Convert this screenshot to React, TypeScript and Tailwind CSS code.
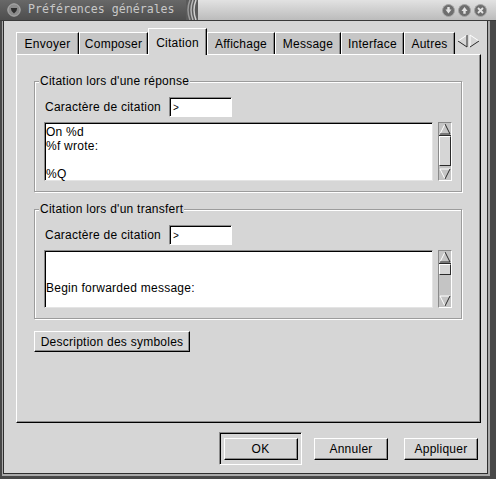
import React from 'react'

const tabs = [
  { name: 'Envoyer', w: 'w-[63px]' },
  { name: 'Composer', w: 'w-[69px]' },
  { name: 'Citation', w: 'w-[59px]', active: true },
  { name: 'Affichage', w: 'w-[68px]' },
  { name: 'Message', w: 'w-[66px]' },
  { name: 'Interface', w: 'w-[63px]' },
  { name: 'Autres', w: 'w-[51px]' },
]

function TitleButton({ kind }: { kind: 'down' | 'up' | 'close' }) {
  return (
    <svg width="13" height="13" viewBox="0 0 13 13">
      <circle cx="6.5" cy="6.5" r="6" fill="#6e6e6e" stroke="#a4a4a4" strokeWidth="1" />
      {kind === 'down' && <path d="M3.5 5.5 L9.5 5.5 L6.5 9.5 Z M5.3 3 L7.7 3 L7.7 5.6 L5.3 5.6 Z" fill="#e4e4e4" />}
      {kind === 'up' && <path d="M3.5 7 L9.5 7 L6.5 3 Z M5.3 6.9 L7.7 6.9 L7.7 9.8 L5.3 9.8 Z" fill="#e4e4e4" />}
      {kind === 'close' && <path d="M4 4 L9 9 M9 4 L4 9" stroke="#e4e4e4" strokeWidth="1.8" />}
    </svg>
  )
}

function TitleBar() {
  return (
    <div className="flex h-[21px] flex-none items-stretch border-b border-[#3a3a3a] bg-[#585858]">
      <div className="flex w-[186px] flex-none items-center bg-gradient-to-b from-[#686868] to-[#4e4e4e] pl-[7px]">
        <svg width="14" height="14" viewBox="0 0 14 14">
          <circle cx="7" cy="7" r="6.2" fill="#8c8c8c" stroke="#b0b0b0" strokeWidth="1" />
          <path d="M3.8 5 L10.2 5 L9.4 8 L7 10.5 L4.6 8 Z" fill="#2e2e2e" />
        </svg>
        <span className="ml-[7px] font-['DejaVu_Sans_Mono',monospace] text-[11.6px] leading-none tracking-normal text-[#c8c8c8]">
          Préférences générales
        </span>
      </div>
      <svg width="12" height="20" viewBox="0 0 12 20" className="flex-none bg-[#5a5a5a]">
        <path d="M4 0 Q0 10 4 20" stroke="#9a9a9a" strokeWidth="1.5" fill="none" />
        <path d="M7 0 Q3 10 7 20" stroke="#b8b8b8" strokeWidth="1.5" fill="none" />
        <path d="M10 0 Q6 10 10 20" stroke="#d0d0d0" strokeWidth="1.5" fill="none" />
      </svg>
      <div className="flex flex-1 items-center justify-end gap-[3px] bg-gradient-to-b from-[#e2e2e2] to-[#bcbcbc] pr-[9px]">
        <TitleButton kind="down" />
        <TitleButton kind="up" />
        <TitleButton kind="close" />
      </div>
    </div>
  )
}

function Button({ label, className = '' }: { label: string; className?: string }) {
  return (
    <div
      className={`flex items-center justify-center border border-t-white border-l-white border-r-black border-b-black bg-[#d6d6d6] shadow-[inset_-1px_-1px_0_#8c8c8c] ${className}`}
    >
      {label}
    </div>
  )
}

function Arrow({ up }: { up?: boolean }) {
  return up ? (
    <svg width="12" height="12" viewBox="0 0 12 12" className="flex-none">
      <path d="M1 11 L6 1" stroke="#ffffff" strokeWidth="1" />
      <path d="M6 1 L11 11 L1 11" stroke="#2a2a2a" strokeWidth="1" fill="none" />
    </svg>
  ) : (
    <svg width="12" height="12" viewBox="0 0 12 12" className="flex-none">
      <path d="M1 1 L11 1" stroke="#ffffff" strokeWidth="1" />
      <path d="M1 1 L6 11" stroke="#ffffff" strokeWidth="1" />
      <path d="M11 1 L6 11" stroke="#2a2a2a" strokeWidth="1" />
    </svg>
  )
}

function Scrollbar({ thumb }: { thumb: string }) {
  return (
    <div className="flex w-[14px] flex-none flex-col border border-t-[#8a8a8a] border-l-[#8a8a8a] border-r-white border-b-white bg-[#c4c4c4]">
      <div className="border-b border-[#2a2a2a]">
        <Arrow up />
      </div>
      <div className={`${thumb} flex-none border border-t-white border-l-white border-r-[#2a2a2a] border-b-[#2a2a2a] bg-[#d6d6d6]`} />
      <div className="flex-1" />
      <Arrow />
    </div>
  )
}

function Group({
  legend,
  text,
  thumb,
  className,
  areaH,
}: {
  legend: string
  text: string
  thumb: string
  className: string
  areaH: string
}) {
  return (
    <div
      className={`relative w-[428px] border border-[#9c9c9c] pl-[9px] pt-[15px] shadow-[inset_1px_1px_0_#fff,1px_1px_0_#fff] ${className}`}
    >
      <span className="absolute left-[4px] top-[-8px] bg-[#d6d6d6] px-[1px] leading-[14px]">{legend}</span>
      <div className="flex h-[20px] items-center">
        <span className="ml-[1px] w-[124px]">Caractère de citation</span>
        <div className="flex h-[20px] w-[63px] items-center border border-t-[#8a8a8a] border-l-[#8a8a8a] border-r-white border-b-white bg-white pl-[3px] text-[10px] shadow-[inset_1px_1px_0_#000]">
          &gt;
        </div>
      </div>
      <div className={`mt-[5px] flex gap-[5px] ${areaH}`}>
        <div className="w-[389px] whitespace-pre border border-t-[#8a8a8a] border-l-[#8a8a8a] border-r-[#e4e4e4] border-b-[#e4e4e4] bg-white pl-[1px] pt-[2px] leading-[14px] shadow-[inset_1px_1px_0_#000]">
          {text}
        </div>
        <Scrollbar thumb={thumb} />
      </div>
    </div>
  )
}

export default function App() {
  return (
    <div className="flex h-[479px] w-[496px] flex-col overflow-hidden bg-[#d6d6d6] font-['Liberation_Sans',Arial,sans-serif] text-[12px] tracking-[0.25px] text-black">
      <TitleBar />
      <div className="flex flex-1 border-b-[3px] border-l-[2px] border-r-[6px] border-[#484848]">
        <div className="flex flex-1 border-b-2 border-l border-r-2 border-[#a9a9a9]">
          <div className="flex flex-1 flex-col border-b border-l border-r border-[#2e2e2e] pl-[12px] pr-[6px] pt-[7px]">
            <div className="flex h-[26px] items-end">
              {tabs.map(({ name, w, active }) =>
                active ? (
                  <div
                    key={name}
                    className={`${w} relative z-10 -mb-px flex h-[27px] items-center justify-center border-l border-t border-r border-l-white border-t-white border-r-black bg-[#d6d6d6] pt-[1px] shadow-[inset_-1px_0_0_#8a8a8a]`}
                  >
                    {name}
                  </div>
                ) : (
                  <div
                    key={name}
                    className={`${w} flex h-[22px] items-center justify-center border-l border-t border-r border-l-white border-t-white border-r-black bg-[#c6c6c6] shadow-[inset_-1px_0_0_#8a8a8a]`}
                  >
                    {name}
                  </div>
                ),
              )}
              <svg width="24" height="14" viewBox="0 0 24 14" className="mb-[6px] ml-[2px]">
                <path d="M10 1 L1 7" stroke="#ffffff" strokeWidth="1" />
                <path d="M1 7 L10 13 L10 1" stroke="#2a2a2a" strokeWidth="1" fill="none" />
                <path d="M13 13 L13 1 L22 7" stroke="#ffffff" strokeWidth="1" fill="none" />
                <path d="M22 7 L13 13" stroke="#2a2a2a" strokeWidth="1" />
              </svg>
            </div>
            <div className="flex h-[369px] flex-col border-b border-l border-r border-t border-b-black border-l-white border-r-black border-t-white pl-[17px] shadow-[inset_-1px_-1px_0_#8c8c8c]">
              <Group
                legend="Citation lors d'une réponse"
                text={'On %d\n%f wrote:\n\n%Q'}
                thumb="h-[30px]"
                className="mt-[26px] h-[111px]"
                areaH="h-[59px]"
              />
              <Group
                legend="Citation lors d'un transfert"
                text={'\n\nBegin forwarded message:'}
                thumb="h-[11px]"
                className="mt-[17px] h-[110px]"
                areaH="h-[58px]"
              />
              <Button label="Description des symboles" className="mt-[12px] h-[21px] w-[156px]" />
            </div>
            <div className="mr-[3px] mt-[9px] flex h-[33px] items-center justify-end">
              <div className="flex h-[33px] w-[83px] items-center justify-center border border-t-[#8a8a8a] border-l-[#8a8a8a] border-r-white border-b-white shadow-[inset_1px_1px_0_#000]">
                <Button label="OK" className="h-[22px] w-[74px]" />
              </div>
              <Button label="Annuler" className="ml-[12px] h-[22px] w-[74px]" />
              <Button label="Appliquer" className="ml-[16px] h-[22px] w-[74px]" />
            </div>
          </div>
        </div>
      </div>
    </div>
  )
}
